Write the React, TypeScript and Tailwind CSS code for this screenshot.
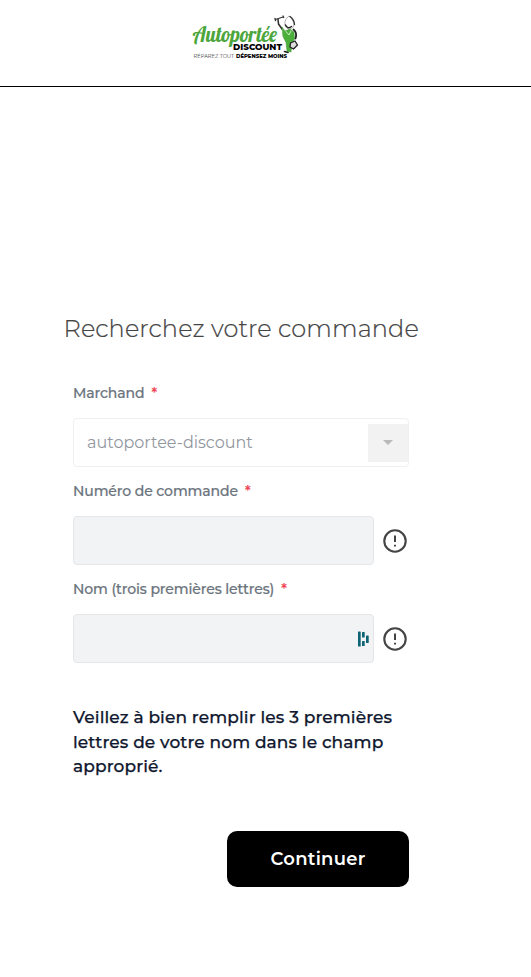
import React from "react";

const Logo: React.FC = () => (
  <svg width="108" height="46" viewBox="0 0 108 46" role="img" aria-label="Autoportée Discount">
    <text
      x="0.5"
      y="27"
      textLength="84.500"
      lengthAdjust="spacingAndGlyphs"
      className="fill-[#4ca63c] font-['Lobster','Liberation_Serif',serif] text-[20.5px] font-normal"
    >
      Autoportée
    </text>
    <text
      x="41"
      y="35.200"
      textLength="49"
      lengthAdjust="spacingAndGlyphs"
      className="fill-black font-['Montserrat','Inter',sans-serif] text-[8px] font-extrabold"
    >
      DISCOUNT
    </text>
    <text
      x="1.500"
      y="43"
      textLength="40.500"
      lengthAdjust="spacingAndGlyphs"
      className="fill-[#444] font-['Montserrat','Inter',sans-serif] text-[5.5px]"
    >
      RÉPAREZ TOUT
    </text>
    <text
      x="44"
      y="43"
      textLength="51"
      lengthAdjust="spacingAndGlyphs"
      className="fill-black font-['Montserrat','Inter',sans-serif] text-[5.5px] font-extrabold"
    >
      DÉPENSEZ MOINS
    </text>

    {/* Mechanic holding a spanner */}
    <g strokeLinecap="round" strokeLinejoin="round" fill="none">
      <path d="M83.500 4.500 91 2M83 3.500l.5 2M91 1l.8 1.500" stroke="#333" strokeWidth="1.300" />
      <path d="M86 4.500 86.500 9l3.500 5" stroke="#333" strokeWidth="1.600" />
      <path d="M93.500 11C92 8 93 4 97 1c2 2 4.500 4.500 5 8 0 3-2 4.500-4.500 5-2 .2-3.300-1.200-4-3Z" fill="#fff" stroke="#888" strokeWidth="0.700" />
      <path d="M98 1.500c2 1.500 4.300 4 4.500 8" stroke="#333" strokeWidth="1.300" />
      <path d="M93.500 10c1.500 3 3.500 3.500 6 1.500" stroke="#222" strokeWidth="1.400" />
      <path d="m90 12 3 4 5-2 4 3 .5 7-2.500 5-1 8-4-.5-1-9-3-6Z" fill="#4caf3c" stroke="#3c9330" strokeWidth="0.500" />
      <path d="M94 16.500 97 20l2-4" stroke="#fff" strokeWidth="0.700" />
      <path d="M101.500 14.500c2.500 2 3.300 5 2 9" stroke="#222" strokeWidth="1.800" />
      <path d="m98.500 28 4.500-2 2.500 4-4 4-3.500-2Z" fill="#ddd" stroke="#222" strokeWidth="1.300" />
      <path d="m92.500 36.500 3.500 1" stroke="#222" strokeWidth="1.600" />
    </g>
  </svg>
);

const AlertIcon: React.FC = () => (
  <svg className="size-6 shrink-0" viewBox="0 0 24 24" fill="none" stroke="#444" strokeLinecap="butt">
    <circle cx="12" cy="12" r="10.700" strokeWidth="2.100" />
    <path d="M12 6.500v6.500M12 15.800v1.800" strokeWidth="2" />
  </svg>
);

const PasswordManagerIcon: React.FC = () => (
  <svg width="12" height="16" viewBox="0 0 12 16" fill="#0e6374">
    <rect x="1" y="0.500" width="2.700" height="15" rx="0.600" />
    <rect x="5" y="1" width="2.700" height="5.500" rx="0.600" />
    <rect x="5" y="10" width="2.700" height="5" rx="0.600" />
    <rect x="9" y="4.500" width="2.700" height="7.500" rx="0.600" />
  </svg>
);

interface FieldLabelProps {
  htmlFor: string;
  children: React.ReactNode;
}

const FieldLabel: React.FC<FieldLabelProps> = ({ htmlFor, children }) => (
  <label
    htmlFor={htmlFor}
    className="flex h-[49px] items-center pb-px text-sm font-medium whitespace-nowrap text-[#6b747d] [-webkit-text-stroke:0.2px_#6b747d]"
  >
    <span className="tracking-[-0.1px]">{children}</span>
    <span className="ml-[7px] text-[#f04050] [-webkit-text-stroke:0.2px_#f04050]">*</span>
  </label>
);

export default function App() {
  return (
    <div className="min-h-screen bg-white font-['Montserrat','Inter',sans-serif]">
      <header className="flex h-[87px] items-start border-b border-black pt-[15px] pl-[192px]">
        <Logo />
      </header>

      <main className="w-[409px] pt-[225px]">
        <h1 className="pl-[63.5px] text-2xl leading-[34px] font-light tracking-[0.13px] whitespace-nowrap text-[#444] [-webkit-text-stroke:0.2px_#444]">
          Recherchez votre commande
        </h1>

        <form className="pt-[23px] pl-[73px]" onSubmit={(e) => e.preventDefault()}>
          <FieldLabel htmlFor="merchant">Marchand</FieldLabel>
          <button
            id="merchant"
            type="button"
            className="flex h-[49px] w-full items-center justify-between rounded border border-[#f0f0f0] pl-[13px] text-base text-[#9297a0]"
          >
            <span>autoportee-discount</span>
            <span className="flex h-[38px] w-10 items-center justify-center bg-[#f2f2f2]">
              <svg width="10" height="5" viewBox="0 0 10 5" fill="#b9b9b9">
                <path d="M0 0h10L5 5Z" />
              </svg>
            </span>
          </button>

          <FieldLabel htmlFor="order">Numéro de commande</FieldLabel>
          <div className="flex items-center gap-[9px]">
            <input id="order" className="h-[49px] w-[301px] rounded border border-[#e5e6e8] bg-[#f2f3f5] px-3" />
            <AlertIcon />
          </div>

          <FieldLabel htmlFor="name">Nom (trois premières lettres)</FieldLabel>
          <div className="flex items-center gap-[9px]">
            <div className="flex h-[49px] w-[301px] items-center rounded border border-[#e5e6e8] bg-[#f2f3f5] pr-1">
              <input id="name" className="h-full min-w-0 grow bg-transparent px-3" />
              <PasswordManagerIcon />
            </div>
            <AlertIcon />
          </div>

          <p className="pt-[42px] text-[17px] leading-[24.5px] font-medium tracking-[0.11px] whitespace-nowrap text-[#10182f] [-webkit-text-stroke:0.25px_#10182f]">
            Veillez à bien remplir les 3 premières
            <br />
            lettres de votre nom dans le champ
            <br />
            approprié.
          </p>

          <button
            type="submit"
            className="mt-[52px] ml-auto flex h-14 w-[182px] items-center justify-center rounded-[10px] bg-black text-lg font-semibold tracking-[0.25px] text-white"
          >
            Continuer
          </button>
        </form>
      </main>
    </div>
  );
}
